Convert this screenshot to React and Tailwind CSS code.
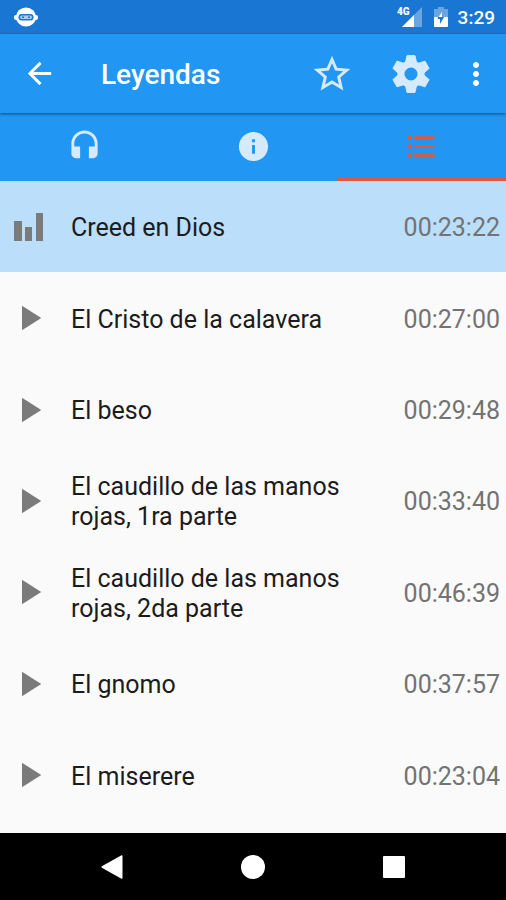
import React, { useState } from 'react';
import {
  MdArrowBack,
  MdStarBorder,
  MdMoreVert,
  MdHeadset,
  MdInfo,
  MdFormatListBulleted,
  MdPlayArrow,
} from 'react-icons/md';

const chapters = [
  { title: "Creed en Dios", time: "00:23:22" },
  { title: "El Cristo de la calavera", time: "00:27:00" },
  { title: "El beso", time: "00:29:48" },
  { title: "El caudillo de las manos rojas, 1ra parte", time: "00:33:40" },
  { title: "El caudillo de las manos rojas, 2da parte", time: "00:46:39" },
  { title: "El gnomo", time: "00:37:57" },
  { title: "El miserere", time: "00:23:04" },
];

const tabs = [
  { id: "player", label: "Reproductor", Icon: MdHeadset },
  { id: "info", label: "Información", Icon: MdInfo },
  { id: "chapters", label: "Capítulos", Icon: MdFormatListBulleted },
];

function GearIcon() {
  return (
    <svg width="38" height="38" viewBox="-19 -19 38 38">
      <g fill="currentColor" stroke="currentColor" strokeLinejoin="round">
        {[0, 60, 120, 180, 240, 300].map((angle) => (
          <path key={angle} d="M-4-18.400H4L5.400-12 7-10H-7L-5.400-12z" transform={`rotate(${angle})`} />
        ))}
      </g>
      <circle r="10" fill="none" stroke="currentColor" strokeWidth="7" />
    </svg>
  );
}

function BarsIcon() {
  return (
    <svg width="29" height="28" viewBox="0 0 29 28" fill="currentColor">
      <rect x="0" y="8" width="8" height="20" />
      <rect x="11" y="14" width="7" height="14" />
      <rect x="22" y="0" width="7" height="28" />
    </svg>
  );
}

function StatusBar() {
  return (
    <div className="flex h-[34px] items-center justify-between bg-[#1976d2] pr-[11px] pl-3.5 text-white">
      <svg width="24" height="20" viewBox="0 0 24 20">
        <rect x="0" y="8" width="24" height="5" rx="2" fill="#fff" />
        <ellipse cx="12" cy="10" rx="10" ry="9.500" fill="#fff" />
        <rect x="4.500" y="7" width="15" height="6.500" rx="3" fill="#1976d2" />
        <rect x="6" y="8.500" width="12" height="3.500" rx="1.700" fill="#a9cbef" />
        <rect x="8" y="9.500" width="2" height="1.500" fill="#1976d2" />
        <rect x="14" y="9.500" width="2" height="1.500" fill="#1976d2" />
      </svg>
      <div className="flex items-center">
        <div className="flex items-start">
          <span className="-mr-1 text-[10px] leading-[10px] font-black">4G</span>
          <svg className="-ml-1" width="20" height="20" viewBox="0 0 20 20">
            <path d="M20 0v20H0z" fill="#fff" fillOpacity=".35" />
            <path d="M12 8v12H0z" fill="#fff" />
          </svg>
        </div>
        <svg className="ml-3" width="14" height="20" viewBox="0 0 14 20">
          <path d="M4 0h6v2h4v9H0V2h4z" fill="#fff" fillOpacity=".35" />
          <path d="M0 10h14v9a1 1 0 0 1-1 1H1a1 1 0 0 1-1-1z" fill="#fff" />
          <path d="M8 5v5H4.500z" fill="#fff" />
          <path d="M10 10H4l-.5 2H6v5z" fill="#1976d2" />
        </svg>
        <span className="ml-2.5 pt-0.5 text-[19px] leading-6 font-medium">3:29</span>
      </div>
    </div>
  );
}

function ChapterRow({ chapter, active, onSelect }) {
  return (
    <li className="flex flex-1">
      <button
        type="button"
        onClick={onSelect}
        className={`flex min-h-20 w-full items-center px-1.5 text-left text-[25px] leading-[30px] ${active ? "bg-[#bbdefb]" : ""}`}
      >
        <span className="flex w-[45px] shrink-0 justify-center text-[#7b7b7b]">
          {active ? <BarsIcon /> : <MdPlayArrow size={42} />}
        </span>
        <span className="ml-5 flex-1 pt-[3px] pr-12 text-[#1c1c1c]">{chapter.title}</span>
        <span className="pt-[3px] text-[#737373]">{chapter.time}</span>
      </button>
    </li>
  );
}

function App() {
  const [tab, setTab] = useState("chapters");
  const [current, setCurrent] = useState(0);

  return (
    <div className="flex min-h-dvh flex-col bg-[#fafafa] font-['Roboto',sans-serif]">
      <StatusBar />
      <header className="z-10 flex h-[79px] items-center bg-[#2196f3] text-white shadow-[0_1px_3px_rgba(0,0,0,0.5)]">
        <button type="button" aria-label="Atrás" className="ml-[22px]">
          <MdArrowBack size={35} />
        </button>
        <h1 className="ml-11 flex-1 pt-0.5 text-[28px] leading-8 font-medium">Leyendas</h1>
        <button type="button" aria-label="Favorito" className="text-[#d5eafd]">
          <MdStarBorder size={44} />
        </button>
        <button type="button" aria-label="Ajustes" className="ml-[38px] text-[#d5eafd]">
          <GearIcon />
        </button>
        <button type="button" aria-label="Más opciones" className="mr-3 ml-7">
          <MdMoreVert size={36} />
        </button>
      </header>
      <nav className="flex h-[68px] bg-[#2196f3]">
        {tabs.map(({ id, label, Icon }) => (
          <button
            key={id}
            type="button"
            aria-label={label}
            onClick={() => setTab(id)}
            className={`flex flex-1 items-center justify-center border-b-3 pt-0.5 ${tab === id ? "border-[#e0583f] text-[#e0583f]" : "border-transparent text-[#d5eafd]"}`}
          >
            <Icon size={35} />
          </button>
        ))}
      </nav>
      <ul className="flex flex-1 flex-col pb-3">
        {chapters.map((chapter, index) => (
          <ChapterRow
            key={index}
            chapter={chapter}
            active={index === current}
            onSelect={() => setCurrent(index)}
          />
        ))}
      </ul>
      <footer className="flex h-[67px] items-center bg-black px-[42px] text-white">
        <button type="button" aria-label="Volver" className="flex flex-1 justify-center">
          <svg width="22" height="24" viewBox="0 0 22 24" fill="currentColor">
            <path d="M20.500.3Q21.500 0 21.500 1v22q0 1-1 .7L.8 12.800Q0 12 .8 11.200z" />
          </svg>
        </button>
        <button type="button" aria-label="Inicio" className="flex flex-1 justify-center">
          <span className="size-6 rounded-full bg-white" />
        </button>
        <button type="button" aria-label="Recientes" className="flex flex-1 justify-center">
          <span className="size-[22px] rounded-[1px] bg-white" />
        </button>
      </footer>
    </div>
  );
}

export default App;
